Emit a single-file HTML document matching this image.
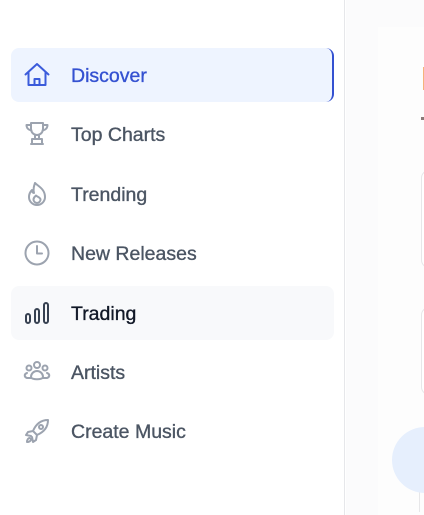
<!DOCTYPE html>
<html><head><meta charset="utf-8"><style>
*{margin:0;padding:0;box-sizing:border-box}
html,body{width:424px;height:515px;overflow:hidden}
body{background:#fff;font-family:"Liberation Sans",sans-serif;position:relative}
.side{position:absolute;left:0;top:0;width:345px;height:515px;background:#fff;border-right:1px solid #e6e7ea;overflow:hidden}
.main{position:absolute;left:346px;top:0;width:78px;height:515px;background:#fbfbfc;overflow:hidden}
.panel{position:absolute;left:32px;top:27px;width:46px;height:488px;background:#fdfdfd;overflow:hidden}
.item{position:absolute;left:11px;width:323px;height:54px;border-radius:8px;font-size:19.5px;color:#4b5563;-webkit-text-stroke:0.35px currentColor}
.item svg{position:absolute;left:12px;top:13px;width:28px;height:28px;fill:none;stroke:#9ca3af;stroke-width:2;stroke-linecap:round;stroke-linejoin:round}
.item span{position:absolute;left:60px;top:16px;line-height:24px}
.act{background:#eef4ff;color:#3451d1;border-right:2px solid #3451d1}
.act svg{stroke:#3b5bdb}
.tr{background:#f8f9fb;color:#111827}
.tr svg{stroke:#374151}
</style></head><body>
<div class="side">
<div class="item act" style="top:48px"><svg viewBox="0 0 28 28"><path d="M2.5 13.5L14 3l11.5 10.5M5.5 11v13h17V11M11.5 24v-6h5v6"/></svg><span>Discover</span></div>
<div class="item" style="top:107px"><svg viewBox="0 0 28 28"><path d="M8 3h12v6a6 6 0 0 1-12 0zM8 5H3.5c0 3 2 5 5 5.5M20 5h4.5c0 3-2 5-5 5.5M12 15h4v4h-4zM9 19h10v5H9zM8 24h12"/></svg><span>Top Charts</span></div>
<div class="item" style="top:167px"><svg viewBox="0 0 28 28"><path d="M12 3c3 3 10 6 10 14a8 8 0 0 1-16 0c0-3 1-5 3-7 0 2 1 3 2 3-1-4 0-7 1-10z"/><path d="M14 23a3.5 3.5 0 0 1-3.5-3.5c0-2 1.5-3 2.5-4 .5 1 4.5 2 4.5 4A3.5 3.5 0 0 1 14 23z"/></svg><span>Trending</span></div>
<div class="item" style="top:226px"><svg viewBox="0 0 28 28"><circle cx="14" cy="14" r="11.5"/><path d="M14 7v7.5h5"/></svg><span>New Releases</span></div>
<div class="item tr" style="top:286px"><svg viewBox="0 0 28 28"><rect x="3" y="15" width="4" height="9" rx="2"/><rect x="12" y="10" width="4" height="14" rx="2"/><rect x="21" y="4" width="4" height="20" rx="2"/></svg><span>Trading</span></div>
<div class="item" style="top:345px"><svg viewBox="0 0 28 28"><circle cx="14" cy="7" r="3"/><circle cx="6" cy="10" r="2.5"/><circle cx="22" cy="10" r="2.5"/><path d="M8 19a6 6 0 0 1 12 0c0 3-12 3-12 0zM4 15c-3 1-3 4 0 5h4M24 15c3 1 3 4 0 5h-4"/></svg><span>Artists</span></div>
<div class="item" style="top:404px"><svg viewBox="0 0 28 28"><path d="M25 3c-7 0-12 4-15 11l4 4c7-3 11-8 11-15zM10 14l-5 1-2 3 5 1M14 18l-1 5-3 2-1-5M7 21c-2 0-3 2-3 4 2 0 4-1 4-3"/><circle cx="18" cy="10" r="2"/></svg><span>Create Music</span></div>
</div>
<div class="main"><div class="panel">
<div style="position:absolute;left:45px;top:40px;width:3px;height:23px;background:#f5b37a"></div>
<div style="position:absolute;left:43px;top:90px;width:3px;height:3px;background:#8a7a78"></div>
<div style="position:absolute;left:43px;top:143px;width:60px;height:98px;border:1px solid #e7e7e9;border-radius:8px;background:#fff"></div>
<div style="position:absolute;left:43px;top:280px;width:60px;height:88px;border:1px solid #e7e7e9;border-radius:8px;background:#fff"></div>
<div style="position:absolute;left:41px;top:425px;width:60px;height:60px;border-left:1px solid #e7e7e9;border-top:1px solid #e7e7e9;border-radius:8px 0 0 0"></div>
<div style="position:absolute;left:14px;top:400px;width:66px;height:66px;border-radius:50%;background:#e6effd"></div>
</div></div>
</body></html>
